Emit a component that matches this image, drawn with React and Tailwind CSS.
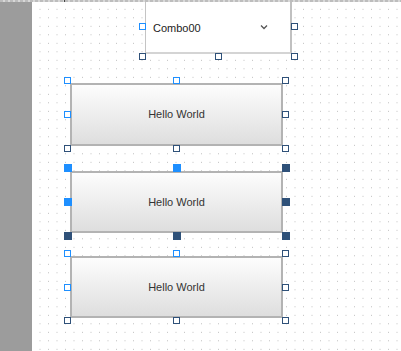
import React from "react";

// selection handle colours
const BLUE = "#1e8fff";
const DARK = "#2f5179";

// which handles are drawn blue (the rest are dark)
const blueKeys = ["tl", "tm", "ml"];

// resize handles, placed around the parent control (relative box)
function Handles({ width, height, filled }) {
  const s = filled ? 8 : 7;
  const xs = { l: -6, m: width / 2 - s / 2, r: width - 1 };
  const ys = { t: filled ? -7 : -6, m: height / 2 - s / 2, b: height - 1 };
  const keys = ["tl", "tm", "tr", "ml", "mr", "bl", "bm", "br"];
  return keys.map((k) => {
    const color = blueKeys.includes(k) ? BLUE : DARK;
    return (
      <div
        key={k}
        className="absolute box-border z-10"
        style={{
          left: xs[k[1]],
          top: ys[k[0]],
          width: s,
          height: s,
          background: filled ? color : "#ffffff",
          border: filled ? "none" : `1px solid ${color}`,
        }}
      />
    );
  });
}

function HelloButton({ height, filled, className }) {
  return (
    <div className={`relative w-[213px] ${className || ""}`} style={{ height }}>
      <div className="box-border w-full h-full flex items-center justify-center border-2 border-[#b3b3b3] bg-gradient-to-b from-[#fdfdfd] to-[#dedede]">
        <span className="text-[11px] text-[#333]">Hello World</span>
      </div>
      <Handles width={213} height={height} filled={filled} />
    </div>
  );
}

export default function App() {
  return (
    <div className="relative flex w-[401px] h-[351px] overflow-hidden bg-white font-['Liberation_Sans',Arial,sans-serif]">
      {/* left gutter */}
      <div className="w-[32px] shrink-0 bg-[#9c9c9c]" />

      {/* design canvas */}
      <div className="relative flex-1 bg-white bg-[radial-gradient(circle,#bcbcbc_0_0.6px,transparent_0.9px)] bg-[length:8.5px_8.5px] bg-[position:3.75px_5.05px]">
        {/* combo box */}
        <div className="absolute left-[113px] top-[-1px] w-[147px] h-[55px]">
          <div className="box-border w-full h-full flex items-center justify-between bg-white border-l border-l-[#c4c4c4] border-r-2 border-r-[#c0c0c0] border-b-2 border-b-[#d4d4d4] pl-[7px] pr-[22px] pt-[4px]">
            <span className="text-[11px] text-[#222] pt-[1px]">Combo00</span>
            <svg width="8" height="6" viewBox="0 0 8 6" className="mb-[1px]">
              <path d="M1 1.5 L4 4.5 L7 1.5" fill="none" stroke="#555" strokeWidth="1.3" />
            </svg>
          </div>
          <Handles width={147} height={55} filled={false} />
        </div>

        {/* stacked buttons */}
        <div className="absolute left-[38px] top-[83px] flex flex-col">
          <HelloButton height={63} filled={false} />
          <HelloButton height={62} filled className="mt-[25px]" />
          <HelloButton height={62} filled={false} className="mt-[23px]" />
        </div>
      </div>

      {/* top ruler strip */}
      <div className="absolute inset-x-0 top-0 h-[2px] bg-[#bdbdbd] bg-[repeating-linear-gradient(90deg,#bdbdbd_0_3px,#d8d8d8_3px_5px)]" />
      <div className="absolute top-0 left-[64px] h-[2px] w-[1px] bg-[#444]" />
    </div>
  );
}
